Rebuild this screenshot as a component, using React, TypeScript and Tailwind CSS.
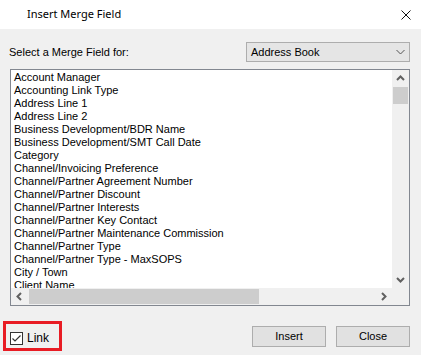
import React from "react";

const fields = [
    "Account Manager",
    "Accounting Link Type",
    "Address Line 1",
    "Address Line 2",
    "Business Development/BDR Name",
    "Business Development/SMT Call Date",
    "Category",
    "Channel/Invoicing Preference",
    "Channel/Partner Agreement Number",
    "Channel/Partner Discount",
    "Channel/Partner Interests",
    "Channel/Partner Key Contact",
    "Channel/Partner Maintenance Commission",
    "Channel/Partner Type",
    "Channel/Partner Type - MaxSOPS",
    "City / Town",
    "Client Name"
];

function Arrow({ dir }: { dir: "up" | "down" | "left" | "right" }) {
    const paths = {
        up: "M1 5 L4.5 1.5 L8 5",
        down: "M1 2 L4.5 5.5 L8 2",
        left: "M5 1 L1.5 4.5 L5 8",
        right: "M2 1 L5.5 4.5 L2 8"
    };
    const size = dir === "up" || dir === "down" ? { w: 9, h: 7 } : { w: 7, h: 9 };
    return (
        <svg width={size.w} height={size.h} viewBox={`0 0 ${size.w} ${size.h}`}>
            <path d={paths[dir]} fill="none" stroke="#606060" strokeWidth="2" />
        </svg>
    );
}

export default function App() {
    return (
        <div className="w-[421px] h-[355px] bg-[#f0f0f0] flex flex-col font-['Liberation_Sans',Arial,sans-serif] text-[11px] text-black">
            {/* title bar */}
            <div className="h-[29px] bg-white flex items-center justify-between pl-[27px] pr-[10px]">
                <span className="font-['Noto_Sans',sans-serif] text-[11px] text-black">
                    Insert Merge Field
                </span>
                <svg width="10" height="10" viewBox="0 0 10 10">
                    <path d="M0.5 0.5 L9.5 9.5 M9.5 0.5 L0.5 9.5" stroke="#111" strokeWidth="1" />
                </svg>
            </div>

            <div className="flex flex-col pl-[10px] pr-[11px]">
                <div className="mt-[13px] h-[20px] flex items-center justify-between">
                    <span className="ml-[-1px]">Select a Merge Field for:</span>
                    <div className="w-[164px] h-[20px] border border-[#adadad] bg-[#e5e5e5] flex items-center justify-between pl-[4px] pr-[4px]">
                        <span>Address Book</span>
                        <svg width="9" height="6" viewBox="0 0 9 6">
                            <path d="M0.5 1 L4.5 5 L8.5 1" fill="none" stroke="#555" strokeWidth="1" />
                        </svg>
                    </div>
                </div>

                {/* list box */}
                <div className="mt-[7px] h-[237px] border border-[#828790] bg-white grid grid-cols-[1fr_17px] grid-rows-[1fr_17px]">
                    <div className="overflow-hidden whitespace-nowrap pt-[1px] pl-[3px]">
                        {fields.map(f => (
                            <div key={f} className="h-[13px] leading-[13px]">
                                {f}
                            </div>
                        ))}
                    </div>
                    <div className="bg-[#f0f0f0] flex flex-col">
                        <div className="h-[17px] flex items-center justify-center">
                            <Arrow dir="up" />
                        </div>
                        <div className="h-[17px] mx-[1px] bg-[#cdcdcd]" />
                        <div className="flex-1" />
                        <div className="h-[17px] flex items-center justify-center">
                            <Arrow dir="down" />
                        </div>
                    </div>
                    <div className="bg-[#f0f0f0] flex">
                        <div className="w-[17px] flex items-center justify-center">
                            <Arrow dir="left" />
                        </div>
                        <div className="w-[230px] my-[1px] ml-[1px] bg-[#cdcdcd]" />
                        <div className="flex-1" />
                        <div className="w-[17px] flex items-center justify-center">
                            <Arrow dir="right" />
                        </div>
                    </div>
                    <div className="bg-[#f0f0f0]" />
                </div>
            </div>

            {/* footer */}
            <div className="mt-[15px] flex items-center justify-between pl-[3px] pr-[11px]">
                <div className="w-[59px] h-[30px] border-[3px] border-[#e81c24] flex items-center pt-[4px] pl-[4px] gap-[4px]">
                    <div className="w-[13px] h-[13px] border border-[#333] bg-white flex items-center justify-center">
                        <svg width="11" height="11" viewBox="0 0 11 11">
                            <path d="M1.5 5.5 L4 8 L9.5 2.5" fill="none" stroke="#333" strokeWidth="1.2" />
                        </svg>
                    </div>
                    <span className="text-[12px]">Link</span>
                </div>
                <div className="flex gap-[10px]">
                    <button className="w-[74px] h-[21px] border border-[#adadad] bg-[#e1e1e1] text-[11px]">
                        Insert
                    </button>
                    <button className="w-[74px] h-[21px] border border-[#adadad] bg-[#e1e1e1] text-[11px]">
                        Close
                    </button>
                </div>
            </div>
        </div>
    );
}
